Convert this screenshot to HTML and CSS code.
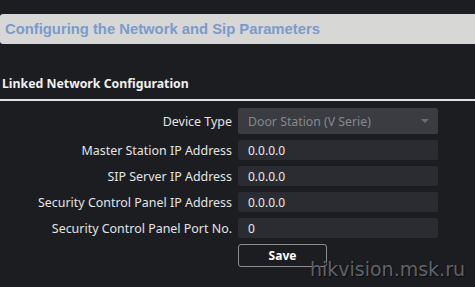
FILE: index.html
```html
<!DOCTYPE html>
<html lang="en">
<head>
  <meta charset="UTF-8">
  <title>Configuring the Network and Sip Parameters</title>
  <link rel="stylesheet" href="styles.css">
</head>
<body>

<div class="page">
  <h1 class="page-title">Configuring the Network and Sip Parameters</h1>

  <h2 class="section-title">Linked Network Configuration</h2>

  <div class="form">
    <label class="label">Device Type</label>
    <div class="select">
      <span>Door Station (V Serie)</span>
      <span class="arrow"></span>
    </div>

    <label class="label">Master Station IP Address</label>
    <input class="field" type="text" value="0.0.0.0">

    <label class="label">SIP Server IP Address</label>
    <input class="field" type="text" value="0.0.0.0">

    <label class="label">Security Control Panel IP Address</label>
    <input class="field" type="text" value="0.0.0.0">

    <label class="label">Security Control Panel Port No.</label>
    <input class="field" type="text" value="0">

    <span></span>
    <button class="btn">Save</button>
  </div>

  <!-- watermark -->
  <div class="watermark">hikvision.msk.ru</div>
</div>

</body>
</html>
```

FILE: styles.css
```css
html, body {
  margin: 0;
  height: 100%;
  background-color: #1b1d21;
}

body {
  font-family: 'Noto Sans', 'Open Sans', Arial, sans-serif;
  color: #e6e6e6;
}

.page {
  position: relative;
  height: 100%;
  overflow: hidden;
  padding-top: 14px;
  box-sizing: border-box;
}

.page-title {
  margin: 0;
  height: 30px;
  line-height: 30px;
  padding-left: 5px;
  background-color: #d7d7d6;
  border-radius: 3px 0 0 3px;
  font-family: 'Liberation Sans', Arial, sans-serif;
  font-size: 14.8px;
  font-weight: bold;
  color: #7a9bcb;
}

.section-title {
  margin: 31px 0 0 0;
  padding: 0 0 6px 2px;
  border-bottom: 2px solid #e2e2e2;
  font-size: 12.3px;
  line-height: 18px;
  font-weight: bold;
  color: #f0f0f0;
}

.form {
  display: grid;
  grid-template-columns: 232px 200px;
  column-gap: 6px;
  row-gap: 6px;
  margin-top: 7px;
  align-items: center;
}

.label {
  text-align: right;
  font-size: 12.45px;
  color: #e4e4e4;
}

.select {
  height: 26px;
  display: flex;
  align-items: center;
  justify-content: space-between;
  padding: 0 9px 0 10px;
  background-color: #3a3c41;
  border-radius: 2px;
  font-size: 12.3px;
  color: #85888d;
  box-sizing: border-box;
}

.arrow {
  width: 0;
  height: 0;
  border-left: 4px solid transparent;
  border-right: 4px solid transparent;
  border-top: 4px solid #6a6d72;
}

.field {
  height: 20px;
  margin: 0;
  padding: 0 0 0 10px;
  border: none;
  border-radius: 2px;
  background-color: #2a2c31;
  font-family: inherit;
  font-size: 12px;
  color: #eaeaea;
  box-sizing: border-box;
  outline: none;
}

.btn {
  width: 89px;
  height: 23px;
  padding: 0;
  background: transparent;
  border: 1px solid #8c8c8c;
  border-radius: 3px;
  font-family: inherit;
  font-size: 12px;
  font-weight: bold;
  color: #ffffff;
  cursor: pointer;
}

.watermark {
  position: absolute;
  right: 10px;
  bottom: 7px;
  font-family: 'DejaVu Sans', Verdana, sans-serif;
  font-size: 19px;
  color: #606266;
  text-shadow: 1px 1px 1px #0c0d0f;
}
```
